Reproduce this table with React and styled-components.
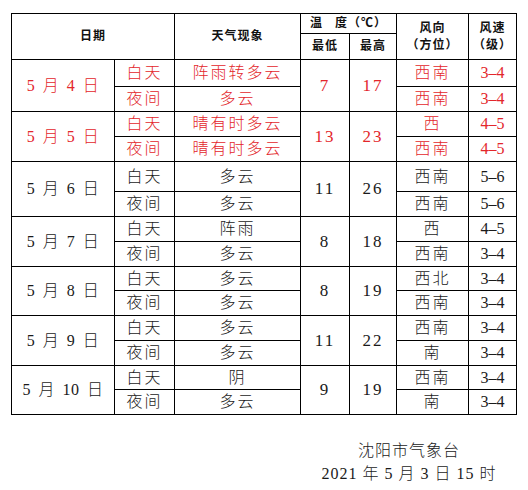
import React from "react";
import styled, { createGlobalStyle } from "styled-components";

const RED = "#e3262b";

const rows = [
  { date: ["5", "4"], red: true, low: 7, high: 17, h: [27, 25], items: [
    { period: "白天", weather: "阵雨转多云", dir: "西南", wind: "3–4" },
    { period: "夜间", weather: "多云", dir: "西南", wind: "3–4" },
  ] },
  { date: ["5", "5"], red: true, low: 13, high: 23, h: [25, 25], items: [
    { period: "白天", weather: "晴有时多云", dir: "西", wind: "4–5" },
    { period: "夜间", weather: "晴有时多云", dir: "西南", wind: "4–5" },
  ] },
  { date: ["5", "6"], low: 11, high: 26, h: [30, 25], items: [
    { period: "白天", weather: "多云", dir: "西南", wind: "5–6" },
    { period: "夜间", weather: "多云", dir: "西南", wind: "5–6" },
  ] },
  { date: ["5", "7"], low: 8, high: 18, h: [25, 25], items: [
    { period: "白天", weather: "阵雨", dir: "西", wind: "4–5" },
    { period: "夜间", weather: "多云", dir: "西南", wind: "3–4" },
  ] },
  { date: ["5", "8"], low: 8, high: 19, h: [24, 25], items: [
    { period: "白天", weather: "多云", dir: "西北", wind: "3–4" },
    { period: "夜间", weather: "多云", dir: "西南", wind: "3–4" },
  ] },
  { date: ["5", "9"], low: 11, high: 22, h: [25, 25], items: [
    { period: "白天", weather: "多云", dir: "西南", wind: "3–4" },
    { period: "夜间", weather: "多云", dir: "南", wind: "3–4" },
  ] },
  { date: ["5", "10"], low: 9, high: 19, h: [24, 25], items: [
    { period: "白天", weather: "阴", dir: "西南", wind: "3–4" },
    { period: "夜间", weather: "多云", dir: "南", wind: "3–4" },
  ] },
];

export default function App() {
  return (
    <>
      <GlobalStyle />
      <Page>
        <Forecast>
          <colgroup>
            <col style={{ width: 103 }} />
            <col style={{ width: 60 }} />
            <col style={{ width: 126 }} />
            <col style={{ width: 49 }} />
            <col style={{ width: 47 }} />
            <col style={{ width: 72 }} />
            <col style={{ width: 48 }} />
          </colgroup>
          <thead>
            <Row $h={20}>
              <HeadCell colSpan={2} rowSpan={2}>日期</HeadCell>
              <HeadCell rowSpan={2}>天气现象</HeadCell>
              <HeadCell colSpan={2}>温&nbsp;&nbsp;&nbsp;度（℃）</HeadCell>
              <HeadCell rowSpan={2}>风向<br />（方位）</HeadCell>
              <HeadCell rowSpan={2}>风速<br />（级）</HeadCell>
            </Row>
            <Row $h={26}>
              <HeadCell>最低</HeadCell>
              <HeadCell>最高</HeadCell>
            </Row>
          </thead>
          <tbody>
            {rows.map((day) =>
              day.items.map((it, i) => (
                <Row key={day.date[1] + i} $h={day.h[i]}>
                  {i === 0 && (
                    <DateCell rowSpan={2} $red={day.red}>
                      {day.date[0]} 月 {day.date[1]} 日
                    </DateCell>
                  )}
                  <Cell $red={day.red}>{it.period}</Cell>
                  <Cell $red={day.red}>{it.weather}</Cell>
                  {i === 0 && (
                    <>
                      <Num rowSpan={2} $red={day.red}>{day.low}</Num>
                      <Num rowSpan={2} $red={day.red}>{day.high}</Num>
                    </>
                  )}
                  <Cell $red={day.red}>{it.dir}</Cell>
                  <Wind $red={day.red}>{it.wind}</Wind>
                </Row>
              ))
            )}
          </tbody>
        </Forecast>
        <Footer>
          <FooterLine>沈阳市气象台</FooterLine>
          <FooterLine>2021 年 5 月 3 日 15 时</FooterLine>
        </Footer>
      </Page>
    </>
  );
}

const GlobalStyle = createGlobalStyle`
  body {
    margin: 0;
    background: #fff;
    font-family: "Liberation Serif", "Noto Sans CJK SC", serif;
    color: #1a1a1a;
  }
`;

const Page = styled.div`
  padding: 13px 0 0 11px;
  width: 528px;
  height: 490px;
  box-sizing: border-box;
`;

const Forecast = styled.table`
  border-collapse: collapse;
  table-layout: fixed;
  width: 506px;
  border: 1px solid #000;

  td, th {
    border: 1px solid #000;
    padding: 0;
    text-align: center;
    vertical-align: middle;
  }
`;

const Row = styled.tr`
  height: ${(p) => p.$h}px;
`;

const HeadCell = styled.th`
  font-family: "Liberation Serif", "Noto Sans CJK SC", serif;
  font-size: 12px;
  font-weight: 700;
  letter-spacing: 1px;
  line-height: 17px;
  color: #111;
`;

const Cell = styled.td`
  font-size: 16px;
  letter-spacing: 2px;
  line-height: 18px;
  font-weight: 300;
  color: ${(p) => (p.$red ? RED : "#1a1a1a")};
`;

const DateCell = styled(Cell)`
  letter-spacing: 0.5px;
  word-spacing: 3px;
`;

const Num = styled(Cell)`
  font-size: 17px;
  letter-spacing: 2px;
`;

const Wind = styled(Cell)`
  letter-spacing: 0;
`;

const Footer = styled.div`
  width: 506px;
  padding-left: 290px;
  box-sizing: border-box;
  margin-top: 24px;
  display: flex;
  flex-direction: column;
  align-items: center;
`;

const FooterLine = styled.div`
  font-size: 16px;
  line-height: 23px;
  letter-spacing: 1px;
  font-weight: 300;
  color: #1a1a1a;
  white-space: nowrap;
`;
